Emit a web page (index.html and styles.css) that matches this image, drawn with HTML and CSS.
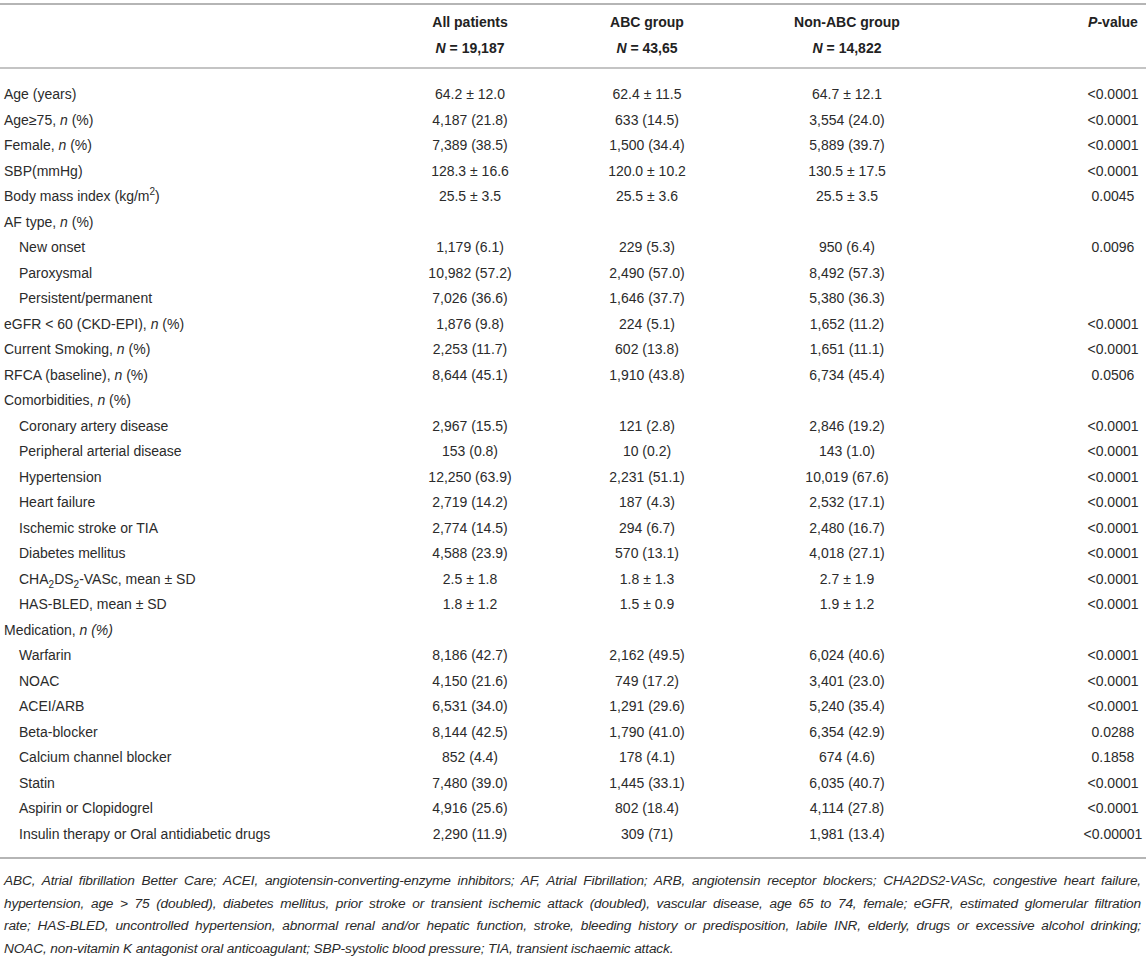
FILE: index.html
```html
<!DOCTYPE html>
<html lang="en">
<head>
<meta charset="utf-8">
<title>Baseline characteristics</title>
<link rel="stylesheet" href="styles.css">
</head>
<body>
<div class="page">
<table class="data">
  <colgroup>
    <col class="c-label"><col class="c-all"><col class="c-abc"><col class="c-non"><col class="c-p">
  </colgroup>
  <thead>
    <tr class="h1">
      <th></th><th>All patients</th><th>ABC group</th><th>Non-ABC group</th><th class="p"><i>P</i>-value</th>
    </tr>
    <tr class="h2">
      <th></th><th><i>N</i> = 19,187</th><th><i>N</i> = 43,65</th><th><i>N</i> = 14,822</th><th class="p"></th>
    </tr>
  </thead>
  <tbody>
    <tr><td>Age (years)</td><td>64.2 ± 12.0</td><td>62.4 ± 11.5</td><td>64.7 ± 12.1</td><td class="p">&lt;0.0001</td></tr>
    <tr><td>Age≥75, <i>n</i> (%)</td><td>4,187 (21.8)</td><td>633 (14.5)</td><td>3,554 (24.0)</td><td class="p">&lt;0.0001</td></tr>
    <tr><td>Female, <i>n</i> (%)</td><td>7,389 (38.5)</td><td>1,500 (34.4)</td><td>5,889 (39.7)</td><td class="p">&lt;0.0001</td></tr>
    <tr><td>SBP(mmHg)</td><td>128.3 ± 16.6</td><td>120.0 ± 10.2</td><td>130.5 ± 17.5</td><td class="p">&lt;0.0001</td></tr>
    <tr><td>Body mass index (kg/m<sup>2</sup>)</td><td>25.5 ± 3.5</td><td>25.5 ± 3.6</td><td>25.5 ± 3.5</td><td class="p">0.0045</td></tr>
    <tr><td>AF type, <i>n</i> (%)</td><td></td><td></td><td></td><td class="p"></td></tr>
    <tr><td class="sub">New onset</td><td>1,179 (6.1)</td><td>229 (5.3)</td><td>950 (6.4)</td><td class="p">0.0096</td></tr>
    <tr><td class="sub">Paroxysmal</td><td>10,982 (57.2)</td><td>2,490 (57.0)</td><td>8,492 (57.3)</td><td class="p"></td></tr>
    <tr><td class="sub">Persistent/permanent</td><td>7,026 (36.6)</td><td>1,646 (37.7)</td><td>5,380 (36.3)</td><td class="p"></td></tr>
    <tr><td>eGFR &lt; 60 (CKD-EPI), <i>n</i> (%)</td><td>1,876 (9.8)</td><td>224 (5.1)</td><td>1,652 (11.2)</td><td class="p">&lt;0.0001</td></tr>
    <tr><td>Current Smoking, <i>n</i> (%)</td><td>2,253 (11.7)</td><td>602 (13.8)</td><td>1,651 (11.1)</td><td class="p">&lt;0.0001</td></tr>
    <tr><td>RFCA (baseline), <i>n</i> (%)</td><td>8,644 (45.1)</td><td>1,910 (43.8)</td><td>6,734 (45.4)</td><td class="p">0.0506</td></tr>
    <tr><td>Comorbidities, <i>n</i> (%)</td><td></td><td></td><td></td><td class="p"></td></tr>
    <tr><td class="sub">Coronary artery disease</td><td>2,967 (15.5)</td><td>121 (2.8)</td><td>2,846 (19.2)</td><td class="p">&lt;0.0001</td></tr>
    <tr><td class="sub">Peripheral arterial disease</td><td>153 (0.8)</td><td>10 (0.2)</td><td>143 (1.0)</td><td class="p">&lt;0.0001</td></tr>
    <tr><td class="sub">Hypertension</td><td>12,250 (63.9)</td><td>2,231 (51.1)</td><td>10,019 (67.6)</td><td class="p">&lt;0.0001</td></tr>
    <tr><td class="sub">Heart failure</td><td>2,719 (14.2)</td><td>187 (4.3)</td><td>2,532 (17.1)</td><td class="p">&lt;0.0001</td></tr>
    <tr><td class="sub">Ischemic stroke or TIA</td><td>2,774 (14.5)</td><td>294 (6.7)</td><td>2,480 (16.7)</td><td class="p">&lt;0.0001</td></tr>
    <tr><td class="sub">Diabetes mellitus</td><td>4,588 (23.9)</td><td>570 (13.1)</td><td>4,018 (27.1)</td><td class="p">&lt;0.0001</td></tr>
    <tr><td class="sub">CHA<sub>2</sub>DS<sub>2</sub>-VASc, mean ± SD</td><td>2.5 ± 1.8</td><td>1.8 ± 1.3</td><td>2.7 ± 1.9</td><td class="p">&lt;0.0001</td></tr>
    <tr><td class="sub">HAS-BLED, mean ± SD</td><td>1.8 ± 1.2</td><td>1.5 ± 0.9</td><td>1.9 ± 1.2</td><td class="p">&lt;0.0001</td></tr>
    <tr><td>Medication, <i>n (%)</i></td><td></td><td></td><td></td><td class="p"></td></tr>
    <tr><td class="sub">Warfarin</td><td>8,186 (42.7)</td><td>2,162 (49.5)</td><td>6,024 (40.6)</td><td class="p">&lt;0.0001</td></tr>
    <tr><td class="sub">NOAC</td><td>4,150 (21.6)</td><td>749 (17.2)</td><td>3,401 (23.0)</td><td class="p">&lt;0.0001</td></tr>
    <tr><td class="sub">ACEI/ARB</td><td>6,531 (34.0)</td><td>1,291 (29.6)</td><td>5,240 (35.4)</td><td class="p">&lt;0.0001</td></tr>
    <tr><td class="sub">Beta-blocker</td><td>8,144 (42.5)</td><td>1,790 (41.0)</td><td>6,354 (42.9)</td><td class="p">0.0288</td></tr>
    <tr><td class="sub">Calcium channel blocker</td><td>852 (4.4)</td><td>178 (4.1)</td><td>674 (4.6)</td><td class="p">0.1858</td></tr>
    <tr><td class="sub">Statin</td><td>7,480 (39.0)</td><td>1,445 (33.1)</td><td>6,035 (40.7)</td><td class="p">&lt;0.0001</td></tr>
    <tr><td class="sub">Aspirin or Clopidogrel</td><td>4,916 (25.6)</td><td>802 (18.4)</td><td>4,114 (27.8)</td><td class="p">&lt;0.0001</td></tr>
    <tr><td class="sub">Insulin therapy or Oral antidiabetic drugs</td><td>2,290 (11.9)</td><td>309 (71)</td><td>1,981 (13.4)</td><td class="p">&lt;0.00001</td></tr>
  </tbody>
</table>
<div class="notes">
  <span class="line">ABC, Atrial fibrillation Better Care; ACEI, angiotensin-converting-enzyme inhibitors; AF, Atrial Fibrillation; ARB, angiotensin receptor blockers; CHA2DS2-VASc, congestive heart failure,</span>
  <span class="line">hypertension, age &gt; 75 (doubled), diabetes mellitus, prior stroke or transient ischemic attack (doubled), vascular disease, age 65 to 74, female; eGFR, estimated glomerular filtration</span>
  <span class="line">rate; HAS-BLED, uncontrolled hypertension, abnormal renal and/or hepatic function, stroke, bleeding history or predisposition, labile INR, elderly, drugs or excessive alcohol drinking;</span>
  <span class="line last">NOAC, non-vitamin K antagonist oral anticoagulant; SBP-systolic blood pressure; TIA, transient ischaemic attack.</span>
</div>
</div>
</body>
</html>
```

FILE: styles.css
```css
html, body {
  margin: 0;
  padding: 0;
  background: #ffffff;
}

.page {
  width: 1146px;
  padding-top: 3px;
  font-family: "Liberation Sans", Arial, Helvetica, sans-serif;
  color: #2b2b2b;
  font-size: 14px;
}

.data {
  width: 1146px;
  border-collapse: collapse;
  table-layout: fixed;
  border-top: 2px solid #b5b5b5;
  border-bottom: 2px solid #b5b5b5;
}

.c-label { width: 400px; }
.c-all { width: 140px; }
.c-abc { width: 214px; }
.c-non { width: 186px; }
.c-p { width: 206px; }

.data th,
.data td {
  padding: 0;
  text-align: center;
  white-space: nowrap;
  line-height: 25.5px;
  vertical-align: middle;
}

.data th {
  font-weight: bold;
  color: #222;
  line-height: 26px;
}

.data thead tr.h1 th { padding-top: 4px; }
.data thead tr.h2 th {
  padding-bottom: 6px;
  border-bottom: 2px solid #c4c4c4;
}

.data td:first-child {
  text-align: left;
  padding-left: 4px;
}

.data td.sub { padding-left: 19px; }

.data .p {
  padding-left: 140px;
}

.data tbody tr:first-child td { padding-top: 13px; }
.data tbody tr:last-child td { padding-bottom: 10px; }

.data sup,
.data sub {
  font-size: 10px;
  line-height: 0;
}

.notes {
  padding-top: 11px;
  padding-left: 4px;
  padding-right: 5px;
  font-family: "Liberation Sans", Arial, sans-serif;
  font-size: 13.7px;
  letter-spacing: -0.15px;
  font-style: italic;
  color: #2b2b2b;
  line-height: 22.7px;
}

.notes .line {
  display: block;
  text-align: justify;
  text-align-last: justify;
  white-space: nowrap;
}

.notes .line.last {
  text-align-last: left;
}
```
